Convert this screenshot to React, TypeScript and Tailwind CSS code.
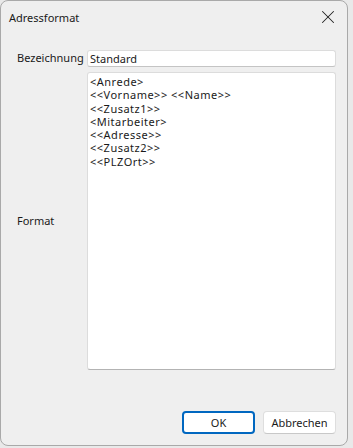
import { X } from 'lucide-react';

const lines = [
  '<Anrede>',
  '<<Vorname>> <<Name>>',
  '<<Zusatz1>>',
  '<Mitarbeiter>',
  '<<Adresse>>',
  '<<Zusatz2>>',
  '<<PLZOrt>>',
];

export default function App() {
  return (
    <div className="w-[353px] h-[448px] bg-[#e9e9e9] overflow-hidden" style={{ fontFamily: '"Noto Sans", "Open Sans", sans-serif' }}>
      <div className="w-[348px] h-[446px] bg-[#efefef] border border-[#a9a9a9] rounded-lg flex flex-col text-[11px] text-[#1a1a1a]">
        {/* title bar */}
        <div className="h-[32px] flex items-center justify-between pl-[8px] pr-[8px] shrink-0">
          <span className="leading-none">Adressformat</span>
          <X size={22} strokeWidth={1.1} className="text-[#222]" />
        </div>

        {/* form */}
        <div className="flex-1 flex flex-col pt-[17px] pl-[16px] pr-[11px]">
          <div className="flex items-center h-[17px]">
            <span className="w-[70px] shrink-0">Bezeichnung</span>
            <div className="flex-1 h-[17px] bg-white border border-[#dcdcdc] border-b-[#c4c4c4] rounded-[3px] flex items-center pl-[2px] leading-none">
              Standard
            </div>
          </div>
          <div className="flex items-center mt-[5px] h-[298px]">
            <span className="w-[70px] shrink-0">Format</span>
            <div className="flex-1 h-full bg-white border border-[#dcdcdc] border-b-[#b3b3b3] rounded-[3px] pl-[2px] pt-[2px] leading-[13.3px] tracking-[0.5px] whitespace-pre">
              {lines.map((l) => (
                <div key={l}>{l}</div>
              ))}
            </div>
          </div>

          {/* buttons */}
          <div className="flex justify-end gap-[8px] mt-[41px]">
            <button className="w-[73px] h-[23px] bg-white border-2 border-[#0067c0] rounded-[4px] leading-none">OK</button>
            <button className="w-[73px] h-[23px] bg-white border border-[#dedede] border-b-[#c8c8c8] rounded-[4px] leading-none">Abbrechen</button>
          </div>
        </div>
      </div>
    </div>
  );
}
